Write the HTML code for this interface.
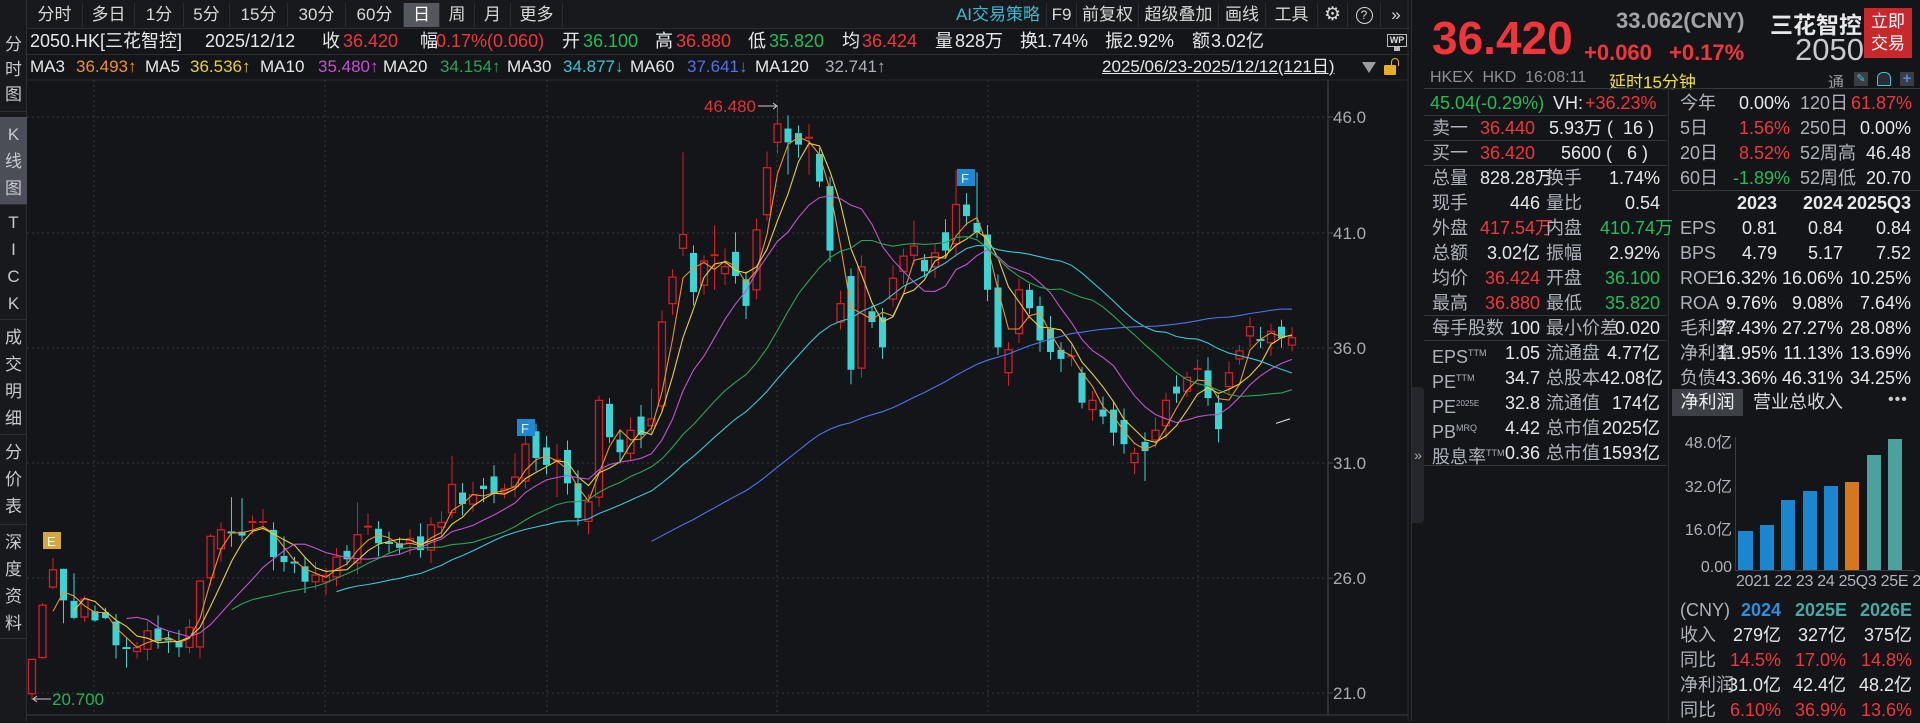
<!DOCTYPE html>
<html><head><meta charset="utf-8">
<style>
*{margin:0;padding:0;box-sizing:border-box}
body{width:1920px;height:721px;background:#131519;overflow:hidden;position:relative;font-family:"Liberation Sans","Noto Sans CJK SC",sans-serif;color:#d6d8dc}
.a{position:absolute;white-space:nowrap}
.tb{position:absolute;top:3px;height:24px;font-size:17px;line-height:24px;text-align:center;color:#d8d8d8;border-right:1px solid #2a2c31}
.r{color:#f0363a}.g{color:#1fbf58}.w{color:#e8e8ea}.gy{color:#aeb2ba}.o{color:#f0902c}.y{color:#e8d03a}.m{color:#c452d0}.gr{color:#2aa455}.c{color:#3cc6d4}.b{color:#4f73ea}
.side{position:absolute;left:0;width:27px;font-size:17px;line-height:26px;text-align:center;color:#c8cacd;border-bottom:1px solid #2c2f35}
.row{position:absolute;height:25px;font-size:18px;line-height:25px}
.row span{position:absolute;white-space:nowrap}
.hl{position:absolute;height:1px;background:#34373e}
</style></head><body>

<!-- sidebar -->
<div class="a" style="left:0;top:0;width:27px;height:721px;background:#17191d;border-right:1px solid #2c2f35"></div>
<div class="side" style="top:32px;height:80px;line-height:25px">分<br>时<br>图</div>
<div class="side" style="top:117px;height:88px;background:#4b4e56;line-height:27px;padding-top:4px">K<br>线<br>图</div>
<div class="side" style="top:205px;height:115px;line-height:27px;padding-top:4px">T<br>I<br>C<br>K</div>
<div class="side" style="top:320px;height:115px;line-height:27px;padding-top:4px">成<br>交<br>明<br>细</div>
<div class="side" style="top:435px;height:90px;line-height:27px;padding-top:4px">分<br>价<br>表</div>
<div class="side" style="top:525px;height:114px;line-height:27px;padding-top:4px">深<br>度<br>资<br>料</div>

<!-- toolbar -->
<div class="a" style="left:27px;top:0;width:1383px;height:29px;background:#17191d;border-bottom:1px solid #2a2c31"></div>
<div class="tb" style="left:27px;width:56px">分时</div>
<div class="tb" style="left:83px;width:52px">多日</div>
<div class="tb" style="left:135px;width:49px">1分</div>
<div class="tb" style="left:184px;width:46px">5分</div>
<div class="tb" style="left:230px;width:58px">15分</div>
<div class="tb" style="left:288px;width:58px">30分</div>
<div class="tb" style="left:346px;width:58px">60分</div>
<div class="tb" style="left:404px;width:36px;background:#55585f;color:#fff">日</div>
<div class="tb" style="left:440px;width:35px">周</div>
<div class="tb" style="left:475px;width:36px">月</div>
<div class="tb" style="left:511px;width:52px">更多</div>
<div class="tb" style="left:950px;width:97px;color:#3fb7d0">AI交易策略</div>
<div class="tb" style="left:1047px;width:30px">F9</div>
<div class="tb" style="left:1077px;width:62px">前复权</div>
<div class="tb" style="left:1139px;width:80px">超级叠加</div>
<div class="tb" style="left:1219px;width:47px">画线</div>
<div class="tb" style="left:1266px;width:52px">工具</div>
<div class="tb" style="left:1318px;width:30px;font-size:19px">⚙</div>
<div class="tb" style="left:1348px;width:33px"><span style="display:inline-block;width:17px;height:17px;border:1.5px solid #d8d8d8;border-radius:50%;font-size:12px;line-height:14px;vertical-align:middle">?</span></div>
<div class="tb" style="left:1381px;width:30px;border:none">»</div>

<!-- info row -->
<div style="position:absolute;left:0;top:29px;font-size:18px;line-height:24px">
<span class="a w" style="left:30px">2050.HK[三花智控]</span>
<span class="a w" style="left:205px">2025/12/12</span>
<span class="a w" style="left:322px">收</span><span class="a r" style="left:343px">36.420</span>
<span class="a w" style="left:420px">幅</span><span class="a r" style="left:436px">0.17%(0.060)</span>
<span class="a w" style="left:562px">开</span><span class="a g" style="left:583px">36.100</span>
<span class="a w" style="left:655px">高</span><span class="a r" style="left:676px">36.880</span>
<span class="a w" style="left:748px">低</span><span class="a g" style="left:769px">35.820</span>
<span class="a w" style="left:842px">均</span><span class="a r" style="left:862px">36.424</span>
<span class="a w" style="left:935px">量</span><span class="a w" style="left:955px">828万</span>
<span class="a w" style="left:1020px">换</span><span class="a w" style="left:1037px">1.74%</span>
<span class="a w" style="left:1105px">振</span><span class="a w" style="left:1123px">2.92%</span>
<span class="a w" style="left:1192px">额</span><span class="a w" style="left:1211px">3.02亿</span>
</div>
<div class="a" style="left:1387px;top:34px;width:20px;height:13px;border:1.5px solid #bbb;font-size:9px;line-height:10px;text-align:center;color:#ddd;font-weight:bold">WP</div>
<div class="a" style="left:1394px;top:47px;width:6px;height:4px;background:#bbb"></div>
<div class="a" style="left:27px;top:54px;width:1383px;height:1px;background:#2a2c31"></div>
<!-- MA row -->
<div style="position:absolute;left:0;top:55px;font-size:17px;line-height:24px">
<span class="a w" style="left:30px">MA3</span><span class="a o" style="left:76px">36.493↑</span>
<span class="a w" style="left:145px">MA5</span><span class="a y" style="left:190px">36.536↑</span>
<span class="a w" style="left:260px">MA10</span><span class="a m" style="left:318px">35.480↑</span>
<span class="a w" style="left:383px">MA20</span><span class="a gr" style="left:440px">34.154↑</span>
<span class="a w" style="left:507px">MA30</span><span class="a c" style="left:563px">34.877↓</span>
<span class="a w" style="left:630px">MA60</span><span class="a b" style="left:687px">37.641↓</span>
<span class="a w" style="left:755px">MA120</span><span class="a gy" style="left:825px">32.741↑</span>
<span class="a w" style="left:1102px;text-decoration:underline">2025/06/23-2025/12/12(121日)</span>
</div>
<div class="a" style="left:1362px;top:62px;width:0;height:0;border-left:7px solid transparent;border-right:7px solid transparent;border-top:11px solid #9a9ca0"></div>
<div class="a" style="left:1384px;top:65px;width:12px;height:10px;background:#e8b020;border-radius:1px"></div>
<div class="a" style="left:1391px;top:58px;width:8px;height:8px;border:1.5px solid #e8b020;border-bottom:none;border-radius:4px 4px 0 0"></div>

<!-- chart -->
<svg id="ch" class="a" style="left:27px;top:0" width="1385" height="721" viewBox="27 0 1385 721">
<line x1="27" y1="80" x2="1408" y2="80" stroke="#2a2c31"/>
<line x1="27" y1="715" x2="1408" y2="715" stroke="#3a3d44"/>
<line x1="1328" y1="80" x2="1328" y2="715" stroke="#45484f"/>
<line x1="1408" y1="0" x2="1408" y2="721" stroke="#2a2c31"/>
<g stroke="#33363d" stroke-dasharray="2,3">
<line x1="27" y1="117" x2="1328" y2="117"/><line x1="27" y1="233" x2="1328" y2="233"/><line x1="27" y1="348" x2="1328" y2="348"/><line x1="27" y1="463" x2="1328" y2="463"/><line x1="27" y1="578" x2="1328" y2="578"/><line x1="27" y1="693" x2="1328" y2="693"/>
<line x1="94" y1="80" x2="94" y2="715"/><line x1="325" y1="80" x2="325" y2="715"/><line x1="547" y1="80" x2="547" y2="715"/><line x1="777" y1="80" x2="777" y2="715"/><line x1="988" y1="80" x2="988" y2="715"/><line x1="1198" y1="80" x2="1198" y2="715"/>
</g>
<g stroke="#45484f"><line x1="1328" y1="117" x2="1333" y2="117"/><line x1="1328" y1="233" x2="1333" y2="233"/><line x1="1328" y1="348" x2="1333" y2="348"/><line x1="1328" y1="463" x2="1333" y2="463"/><line x1="1328" y1="578" x2="1333" y2="578"/><line x1="1328" y1="693" x2="1333" y2="693"/></g>
<g fill="#a8abb0" font-size="17" font-family="Liberation Sans,sans-serif">
<text x="1333" y="123">46.0</text><text x="1333" y="239">41.0</text><text x="1333" y="354">36.0</text><text x="1333" y="469">31.0</text><text x="1333" y="584">26.0</text><text x="1333" y="699">21.0</text>
</g>
<g id="cg"></g>
<rect x="43" y="532" width="18" height="17" fill="#d4a93a"/><text x="47" y="546" fill="#fff" font-size="13" font-family="Liberation Sans,sans-serif">E</text>
<rect x="517" y="419" width="18" height="17" fill="#1e88d0"/><text x="521" y="433" fill="#dfefff" font-size="13" font-family="Liberation Sans,sans-serif">F</text>
<rect x="957" y="169" width="18" height="17" fill="#1e88d0"/><text x="961" y="183" fill="#dfefff" font-size="13" font-family="Liberation Sans,sans-serif">F</text>
<text x="704" y="112" fill="#e0333a" font-size="17" font-family="Liberation Sans,sans-serif">46.480</text>
<line x1="758" y1="106" x2="777" y2="106" stroke="#ccc"/><path d="M773 103 L777 106 L773 109" stroke="#ccc" fill="none"/>
<line x1="33" y1="699" x2="51" y2="699" stroke="#ccc"/><path d="M37 696 L33 699 L37 702" stroke="#ccc" fill="none"/>
<text x="52" y="705" fill="#22b455" font-size="17" font-family="Liberation Sans,sans-serif">20.700</text>
</svg>

<!-- right panel -->
<div class="a" style="left:1411px;top:0;width:1px;height:721px;background:#2c2f35"></div>
<div class="a" style="left:1412px;top:387px;width:12px;height:136px;background:#25272c;border-radius:0 4px 4px 0;color:#aaa;font-size:14px;line-height:136px;text-align:center">»</div>
<div class="a" style="left:1432px;top:12px;font-size:46px;line-height:52px;font-weight:bold;color:#f0363a">36.420</div>
<div class="a" style="left:1616px;top:8px;font-size:22px;font-weight:bold;color:#a0a3a8">33.062(CNY)</div>
<div class="a" style="left:1584px;top:40px;font-size:22px;font-weight:bold;color:#f0363a">+0.060</div>
<div class="a" style="left:1669px;top:40px;font-size:22px;font-weight:bold;color:#f0363a">+0.17%</div>
<div class="a" style="left:1770px;top:6px;font-size:23px;font-weight:bold;color:#e8e8ea">三花智控</div>
<div class="a" style="left:1795px;top:32px;font-size:31px;color:#c8cacd">2050</div>
<div class="a" style="left:1864px;top:8px;width:48px;height:50px;background:#c8282b;color:#fff;font-size:17px;line-height:22px;text-align:center;padding-top:3px">立即<br>交易</div>
<div class="a" style="left:1430px;top:69px;font-size:16px;color:#8d9096">HKEX&nbsp;&nbsp;HKD&nbsp;&nbsp;16:08:11</div>
<div class="a" style="left:1609px;top:68px;font-size:17px;color:#f0e040">延时15分钟</div>
<div class="a" style="left:1828px;top:69px;font-size:16px;color:#9a9ca0">通</div>
<div class="a" style="left:1854px;top:72px;width:14px;height:14px;background:#3a3d44;color:#3cc6d4;font-size:11px;line-height:14px;text-align:center">✎</div>
<div class="a" style="left:1877px;top:72px;width:14px;height:14px;background:#2a2d33;border:1px solid #3cc6d4;border-radius:6px 6px 1px 1px"></div>
<div class="a" style="left:1900px;top:72px;width:14px;height:14px;background:#3a3d44;color:#4a8ae8;font-size:15px;line-height:13px;text-align:center;font-weight:bold">+</div>
<div class="hl" style="left:1424px;top:88px;width:496px"></div>
<div class="a" style="left:1668px;top:89px;width:1px;height:632px;background:#2c2f35"></div>

<div class="row" style="left:0;top:91px"><span class="g" style="left:1430px">45.04(-0.29%)</span><span class="w" style="left:1553px">VH:</span><span class="r" style="left:1585px">+36.23%</span></div>
<div class="hl" style="left:1424px;top:115px;width:243px"></div>
<div class="row" style="top:116px;left:0"><span class="gy" style="left:1432px">卖一</span><span class="r" style="left:1480px">36.440</span><span class="w" style="left:1549px">5.93万 (&nbsp; 16 )</span></div>
<div class="hl" style="left:1424px;top:140px;width:243px"></div>
<div class="row" style="top:141px;left:0"><span class="gy" style="left:1432px">买一</span><span class="r" style="left:1480px">36.420</span><span class="w" style="left:1561px">5600 (&nbsp;&nbsp; 6 )</span></div>
<div class="hl" style="left:1424px;top:165px;width:243px"></div>

<div id="lrows"></div>
<div class="hl" style="left:1424px;top:315px;width:243px"></div>
<div class="hl" style="left:1424px;top:340px;width:243px"></div>
<div class="hl" style="left:1424px;top:465px;width:243px"></div>
<div id="rrows"></div>
<div class="hl" style="left:1672px;top:190px;width:248px"></div>

<!-- tabs -->
<div class="a" style="left:1672px;top:389px;width:71px;height:27px;background:#3d4047;color:#eee;font-size:18px;line-height:27px;text-align:center">净利润</div>
<div class="a" style="left:1753px;top:389px;font-size:18px;line-height:27px;color:#d8d8da">营业总收入</div>
<div class="a" style="left:1888px;top:386px;font-size:16px;line-height:27px;color:#ccc;letter-spacing:1px">•••</div>
<!-- bar chart -->
<div class="a" style="left:1735px;top:437px;width:1px;height:134px;background:#3a3d44"></div>
<div class="a" style="left:1735px;top:570px;width:180px;height:1px;background:#3a3d44"></div>
<div class="a gy" style="left:1677px;top:429px;font-size:16px;width:55px;text-align:right">48.0亿</div>
<div class="a gy" style="left:1677px;top:473px;font-size:16px;width:55px;text-align:right">32.0亿</div>
<div class="a gy" style="left:1677px;top:516px;font-size:16px;width:55px;text-align:right">16.0亿</div>
<div class="a gy" style="left:1677px;top:559px;font-size:16px;width:55px;text-align:right">0.00</div>
<div class="a" style="left:1738px;top:531px;width:15px;height:39px;background:#1a86cf"></div>
<div class="a" style="left:1760px;top:525px;width:14px;height:45px;background:#1a86cf"></div>
<div class="a" style="left:1781px;top:500px;width:14px;height:70px;background:#1a86cf"></div>
<div class="a" style="left:1803px;top:491px;width:14px;height:79px;background:#1a86cf"></div>
<div class="a" style="left:1824px;top:486px;width:14px;height:84px;background:#1a86cf"></div>
<div class="a" style="left:1845px;top:482px;width:14px;height:88px;background:#d5781b"></div>
<div class="a" style="left:1867px;top:455px;width:14px;height:115px;background:#4aa19e"></div>
<div class="a" style="left:1888px;top:439px;width:14px;height:131px;background:#4aa19e"></div>
<div class="a gy" style="left:1736px;top:573px;font-size:16px;letter-spacing:-0.3px">2021 22 23 24 25Q3 25E 26E</div>

<div class="row" style="top:598px;left:0"><span class="gy" style="left:1680px">(CNY)</span><span style="left:1740px;width:41px;text-align:right;color:#2a8fe0;font-weight:bold">2024</span><span style="left:1795px;width:51px;text-align:right;color:#4aa9a2;font-weight:bold">2025E</span><span style="left:1860px;width:52px;text-align:right;color:#4aa9a2;font-weight:bold">2026E</span></div>
<div class="row" style="top:623px;left:0"><span class="gy" style="left:1680px">收入</span><span class="w" style="left:1720px;width:61px;text-align:right">279亿</span><span class="w" style="left:1785px;width:61px;text-align:right">327亿</span><span class="w" style="left:1851px;width:61px;text-align:right">375亿</span></div>
<div class="row" style="top:648px;left:0"><span class="gy" style="left:1680px">同比</span><span class="r" style="left:1720px;width:61px;text-align:right">14.5%</span><span class="r" style="left:1785px;width:61px;text-align:right">17.0%</span><span class="r" style="left:1851px;width:61px;text-align:right">14.8%</span></div>
<div class="row" style="top:673px;left:0"><span class="gy" style="left:1680px">净利润</span><span class="w" style="left:1720px;width:61px;text-align:right">31.0亿</span><span class="w" style="left:1785px;width:61px;text-align:right">42.4亿</span><span class="w" style="left:1851px;width:61px;text-align:right">48.2亿</span></div>
<div class="row" style="top:698px;left:0"><span class="gy" style="left:1680px">同比</span><span class="r" style="left:1720px;width:61px;text-align:right">6.10%</span><span class="r" style="left:1785px;width:61px;text-align:right">36.9%</span><span class="r" style="left:1851px;width:61px;text-align:right">13.6%</span></div>

<script>
(function(){
function row(top,cells){var h='<div class="row" style="left:0;top:'+top+'px">';cells.forEach(function(c){var st='left:'+c[0]+'px;';if(c[3])st+='width:'+c[3]+'px;text-align:right;';if(c[4])st+=c[4];h+='<span class="'+c[2]+'" style="'+st+'">'+c[1]+'</span>';});return h+'</div>';}
var L=[[166,'总量','828.28万','w','换手','1.74%','w'],[191,'现手','446','w','量比','0.54','w'],[216,'外盘','417.54万','r','内盘','410.74万','g'],[241,'总额','3.02亿','w','振幅','2.92%','w'],[266,'均价','36.424','r','开盘','36.100','g'],[291,'最高','36.880','r','最低','35.820','g'],[316,'每手股数','100','w','最小价差','0.020','w'],[341,'EPS<sup style="font-size:9px">TTM</sup>','1.05','w','流通盘','4.77亿','w'],[366,'PE<sup style="font-size:9px">TTM</sup>','34.7','w','总股本','42.08亿','w'],[391,'PE<sup style="font-size:8px">2025E</sup>','32.8','w','流通值','174亿','w'],[416,'PB<sup style="font-size:9px">MRQ</sup>','4.42','w','总市值','2025亿','w'],[441,'股息率<sup style="font-size:9px">TTM</sup>','0.36','w','总市值','1593亿','w']];
var h='';L.forEach(function(r){h+=row(r[0],[[1432,r[1],'gy'],[1480,r[2],r[3],60],[1546,r[4],'gy'],[1600,r[5],r[6],60]]);});
document.getElementById('lrows').innerHTML=h;
var R=[[91,'今年','0.00%','w','120日','61.87%','r'],[116,'5日','1.56%','r','250日','0.00%','w'],[141,'20日','8.52%','r','52周高','46.48','w'],[166,'60日','-1.89%','g','52周低','20.70','w']];
h='';R.forEach(function(r){h+=row(r[0],[[1680,r[1],'gy'],[1730,r[2],r[3],60],[1800,r[4],'gy'],[1851,r[5],r[6],60]]);});
h+=row(191,[[1717,'2023','w',60,'font-weight:bold'],[1783,'2024','w',60,'font-weight:bold'],[1840,'2025Q3','w',71,'font-weight:bold']]);
var F=[['EPS','0.81','0.84','0.84'],['BPS','4.79','5.17','7.52'],['ROE','16.32%','16.06%','10.25%'],['ROA','9.76%','9.08%','7.64%'],['毛利率','27.43%','27.27%','28.08%'],['净利率','11.95%','11.13%','13.69%'],['负债','43.36%','46.31%','34.25%']];
F.forEach(function(r,i){h+=row(216+25*i,[[1680,r[0],'gy'],[1707,r[1],'w',70],[1773,r[2],'w',70],[1841,r[3],'w',70]]);});
document.getElementById('rrows').innerHTML=h;

var D=[[20.97,22.46,22.5,20.7],[22.54,24.81,24.9,22.5],[25.6,26.35,26.86,25.5],[26.39,25.02,26.4,24.03],[25,24.26,26.2,24.2],[24.3,25.08,25.2,24.1],[24.55,24.15,24.8,24.1],[24.5,24.25,24.7,24.2],[24.1,23.07,0,0],[22.95,22.9,23.4,22.1],[22.8,22.97,0,22.5],[22.9,23.7,24.1,0],[23.8,23.25,0,0],[23.32,23.3,0,0],[23.25,22.98,0,0],[22.98,23.85,24.2,0],[23,25.86,25.9,0],[26,27.8,27.9,0],[27.26,28.08,0,0],[27.97,27.96,29.5,27.35],[28,27.83,29.45,0],[28.38,28.42,28.7,0],[28.38,28.42,0,0],[28.08,26.9,0,0],[26.95,26.68,27.8,0],[26.66,26.65,0,26.2],[26.5,25.83,0,0],[25.83,26.12,0,0],[25.83,26.1,0,0],[26.04,26.9,27.3,0],[27.17,26.8,0,0],[26.65,27.87,29.27,0],[28.18,28.22,0,0],[28.13,27.5,0,0],[27.51,27.5,0,0],[27.5,27.3,0,0],[27.5,27.7,0,0],[27.8,27.2,0,0],[27.2,28.3,0,0],[28.2,28.4,0,0],[28.83,30.05,31.3,0],[29.7,29.2,0,0],[29.2,29.6,0,0],[30,29.85,0,0],[30.4,29.65,0,0],[29.7,29.85,0,0],[29.97,30.37,31.4,0],[30.2,31.8,0,0],[32.36,31.2,0,0],[31.66,30.9,0,0],[31.05,31.1,31.8,29.5],[31.55,30.1,0,0],[30.1,28.6,0,0],[28.45,29.3,0,0],[29.5,33.7,33.9,0],[33.55,32.1,0,0],[32,31.45,0,0],[31.4,32.4,0,0],[33,32.2,33.5,0],[32.6,32.9,34.2,0],[33.46,37.1,37.6,0],[37.9,39.05,39.4,0],[40.3,40.9,44.47,0],[40.1,38.4,0,0],[38.7,39.75,40,0],[39.98,40,41.3,38.5],[39.2,39.5,40.3,0],[40.15,39.1,41,0],[38.96,37.8,0,0],[38.5,41.1,0,0],[41.76,43.8,44.5,0],[44.9,45.7,46.48,0],[45.5,44.9,0,43.5],[45.3,44.8,0,0],[45.08,45.1,45.7,43.5],[44.4,43.2,0,0],[43,40.2,0,0],[37.1,37.9,0,0],[39.1,35.03,0,34.4],[35.1,39.5,0,0],[37.57,37.1,0,0],[37.3,36,0,0],[38.1,39,0,0],[39.3,39.96,0,0],[40,40.4,41.5,0],[39.8,39.3,0,0],[39.5,40.1,0,0],[41,40.2,0,0],[40.5,42.2,43.7,0],[42.2,41.7,0,0],[41.4,41,43.6,0],[40.9,38.5,0,0],[38.6,36,0,0],[34.9,35.9,0,0],[36.6,38.5,0,0],[38.5,37.7,0,0],[37.8,36.3,0,0],[36.8,35.8,0,0],[35.9,35.5,0,0],[35.58,35.62,0,0],[34.9,33.6,0,0],[33.3,33.7,0,0],[33.3,33,0,0],[33.3,32.3,0,0],[32.85,31.8,0,0],[31,31.4,0,30.5],[31.9,31.5,0,30.2],[31.98,32.4,0,0],[32.6,33.7,0,0],[34.3,34,0,0],[34.1,34.7,0,0],[35.05,35.07,0,0],[35,33.8,0,0],[33.6,32.45,0,0],[34.3,34.9,0,0],[35.5,35.85,0,0],[36.5,36.9,0,0],[36.32,36.3,0,0],[36.2,36.7,0,0],[36.9,36.4,37.2,0],[36.1,36.42,36.88,35.82]];
function Y(p){return 117+(46-p)*23.04;}function X(i){return 32+10.5*i;}
var s='';
D.forEach(function(d,i){var o=d[0],c=d[1],hi=d[2]||Math.max(o,c)+0.25+((i*7)%5)*0.08,lo=d[3]||Math.min(o,c)-0.25-((i*3)%5)*0.08;var x=X(i);var up=c>=o;var col=up?'#d21f25':'#3cd3d3';var t=Y(Math.max(o,c)),b=Y(Math.min(o,c));if(b-t<1.5){b=t+1.5;}
s+='<line x1="'+x+'" y1="'+Y(hi)+'" x2="'+x+'" y2="'+t+'" stroke="'+col+'"/><line x1="'+x+'" y1="'+b+'" x2="'+x+'" y2="'+Y(lo)+'" stroke="'+col+'"/>';
if(Math.abs(o-c)<0.06){s+='<line x1="'+(x-4)+'" y1="'+t+'" x2="'+(x+4)+'" y2="'+t+'" stroke="'+col+'" stroke-width="2"/>';}
else if(up){s+='<rect x="'+(x-3.5)+'" y="'+t+'" width="7" height="'+(b-t)+'" fill="#14161b" stroke="'+col+'" stroke-width="1.3"/>';}
else{s+='<rect x="'+(x-3.5)+'" y="'+t+'" width="7" height="'+(b-t)+'" fill="'+col+'"/>';}
});
var MA=[[3,'#f0902c'],[5,'#e8d03a'],[10,'#c452d0'],[20,'#2aa455'],[30,'#3cc6d4'],[60,'#4f73ea'],[120,'#d8d8d8']];
MA.forEach(function(m){var n=m[0],pts=[];for(var i=n-1;i<D.length;i++){var sum=0;for(var k=i-n+1;k<=i;k++)sum+=D[k][1];pts.push(X(i).toFixed(1)+','+Y(sum/n).toFixed(1));}
if(n==120){pts=['1276,'+Y(32.7).toFixed(1),'1290,'+Y(32.9).toFixed(1)];}
s+='<polyline points="'+pts.join(' ')+'" fill="none" stroke="'+m[1]+'" stroke-width="1.1"/>';});
document.getElementById('cg').innerHTML=s;
})();
</script>
</body></html>
